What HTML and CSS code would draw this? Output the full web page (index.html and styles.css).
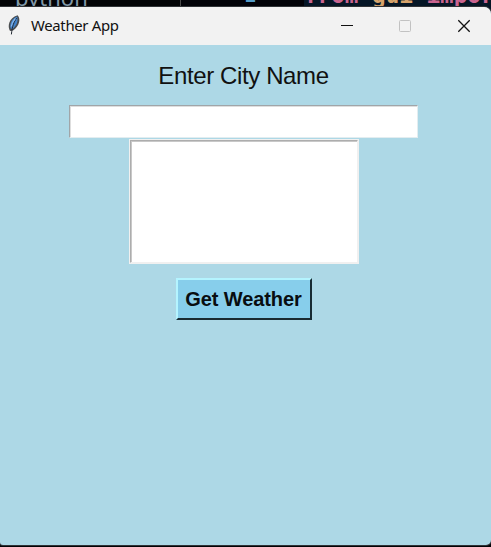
FILE: index.html
```
<!DOCTYPE html>
<html lang="en">
<head>
<meta charset="utf-8">
<title>Weather App</title>
<link rel="stylesheet" href="styles.css">
</head>
<body>
<div class="editor">
  <span class="file">python</span>
  <span class="line">1</span>
  <span class="code"><span class="kw">from</span> <span class="mod">gui</span> <span class="kw">import</span></span>
</div>
<main class="window">
  <header class="titlebar">
    <svg class="feather" width="14" height="22" viewBox="0 0 14 22">
      <path d="M3 17C.2 12 1.6 4.2 10.6 1.2C14 4.8 12.4 12 6 16.6Z" fill="#4a4d50"/>
      <path d="M3.8 14.8C2.2 9.8 4.8 4.6 10 2.4C11.6 6.5 9.6 11.8 5.4 15Z" fill="#4384cc"/>
      <path d="M9.6 4C7 8 5.2 12 4.4 20.4" fill="none" stroke="#252b34" stroke-width="1"/>
      <path d="M8.4 4.4C6.2 7 4.8 9.5 4.2 12.5" fill="none" stroke="#86b8ee" stroke-width="1.2"/>
    </svg>
    <h1 class="title">Weather App</h1>
    <svg class="controls" width="130" height="14" viewBox="0 0 130 14" fill="none">
      <path d="M0 6.5H12" stroke="#111"/>
      <rect x="58.5" y="1.5" width="11" height="11" rx="1" stroke="#c2c2c2"/>
      <path d="M117.3 1.3L128.7 12.7M128.7 1.3L117.3 12.7" stroke="#111" stroke-width="1.3"/>
    </svg>
  </header>
  <form class="client">
    <label class="label" for="city">Enter City Name</label>
    <input class="entry" id="city" type="text">
    <div class="output"><div class="output-area"></div></div>
    <button class="button" type="button">Get Weather</button>
  </form>
</main>
</body>
</html>
```
FILE: styles.css
```
* { box-sizing: border-box; }

body {
  position: relative;
  margin: 0;
  height: 547px;
  overflow: hidden;
  background: #020306;
  padding-top: 7px;
}

.editor {
  position: absolute;
  top: 0;
  left: 0;
  width: 491px;
  height: 20px;
  overflow: hidden;
  display: flex;
  background: linear-gradient(90deg, #020306 180px, #4a4a4a 180px, #4a4a4a 181px, #020208 181px, #020208 304px, #051626 304px);
  line-height: 24px;
  white-space: pre;
}

.file {
  flex: none;
  width: 243px;
  padding-left: 15px;
  margin-top: -15px;
  font: 22px/24px "Noto Sans", sans-serif;
  color: #8198a8;
}

.line {
  flex: none;
  width: 61px;
  margin-top: -18px;
  font: 22.6px/24px "DejaVu Sans Mono", monospace;
  color: #539bc8;
}

.code {
  flex: none;
  margin-top: -17px;
  font: bold 22.6px/24px "DejaVu Sans Mono", monospace;
}

.kw { color: #c9648f; }
.mod { color: #d6a36b; }

.window {
  position: relative;
  height: 538px;
  overflow: hidden;
  border-radius: 0 7px 5px 3px;
  background: #add8e6;
  box-shadow: 0 0 0 1px #303337;
}

.titlebar {
  display: flex;
  align-items: center;
  height: 38px;
  padding-left: 7px;
  background: #f2f2f2;
}

.feather { margin-top: -2px; }

.title {
  width: 320px;
  margin: -2px 0 0 10px;
  font: 14.9px/20px "Noto Sans", "Open Sans", sans-serif;
  letter-spacing: -.32px;
  color: #111;
}

.controls { margin: 0 0 0 -10px; }

.client {
  display: flex;
  flex-direction: column;
  align-items: center;
  padding-right: 4px;
}

.label {
  margin-top: 16px;
  font: 24px/30px "Liberation Sans", Arial, sans-serif;
  letter-spacing: -.38px;
  color: #111;
}

.entry {
  width: 349px;
  height: 33px;
  margin: 14px 1px 0 0;
  padding: 2px;
  border: 1px solid;
  border-color: #a0a5a8 #e3edf0 #e3edf0 #a0a5a8;
  border-radius: 0;
  background: #fff;
  box-shadow: inset 1px 1px #dedede;
  font: 24px "Liberation Sans", Arial, sans-serif;
  outline: 0;
}

.output {
  width: 230px;
  height: 125px;
  margin-top: 1px;
  padding: 1px;
  background: #f0f0f0;
}

.output-area {
  height: 100%;
  border: 1px solid;
  border-color: #adadad #f0f0f0 #f0f0f0 #adadad;
  background: #fff;
  box-shadow: inset 1px 1px #c8c8c8;
}

.button {
  width: 136px;
  height: 42px;
  margin-top: 14px;
  padding: 0;
  border: 2px solid;
  border-color: #b4f4ff #182b33 #182b33 #b4f4ff;
  border-radius: 0;
  background: #87ceeb;
  font: bold 20px/24px "Liberation Sans", Arial, sans-serif;
  letter-spacing: -.1px;
  color: #080d10;
  white-space: nowrap;
}
```
